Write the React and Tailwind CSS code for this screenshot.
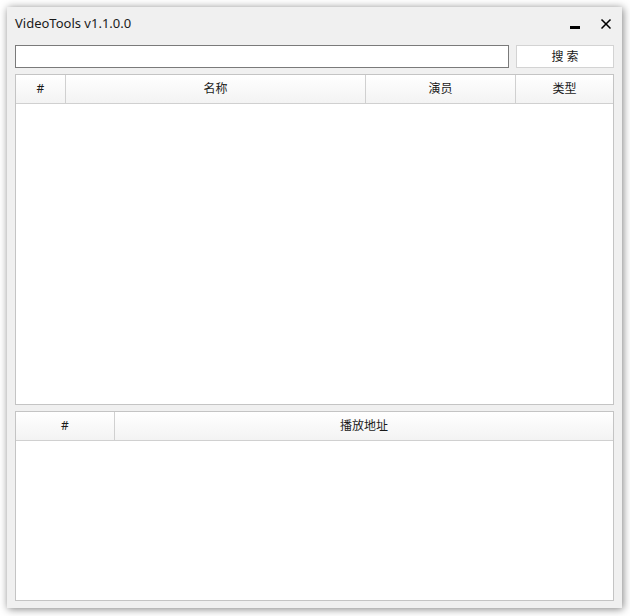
import { X } from 'lucide-react';

const mainCols = [
  { label: '#', width: 'w-[50px]' },
  { label: '名称', width: 'w-[300px]' },
  { label: '演员', width: 'w-[150px]' },
  { label: '类型', width: 'flex-1' },
];

const urlCols = [
  { label: '#', width: 'w-[99px]' },
  { label: '播放地址', width: 'flex-1' },
];

const Table = ({ cols, height }) => (
  <div className={`flex flex-col border border-[#c4c4c4] bg-white ${height}`}>
    <div className="flex h-[29px] shrink-0 border-b border-[#d0d0d0] bg-gradient-to-b from-white to-[#f3f3f3]">
      {cols.map((col, i) => (
        <div
          key={col.label + i}
          className={`${col.width} flex items-center justify-center text-[12px] text-[#1a1a1a] ${
            i < cols.length - 1 ? 'border-r border-[#d0d0d0]' : ''
          }`}
        >
          {col.label}
        </div>
      ))}
    </div>
    <div className="flex-1 bg-white" />
  </div>
);

const App = () => {
  return (
    <div
      className="h-[616px] w-[630px] bg-white pl-[7px] pt-[7px]"
      style={{ fontFamily: '"Noto Sans", "Noto Sans CJK SC", sans-serif' }}
    >
      <div className="flex h-[601px] w-[615px] flex-col bg-[#f0f0f0] px-[8px] pb-[6px] shadow-[1px_1px_8px_rgba(0,0,0,0.5)]">
        {/* title bar */}
        <div className="flex h-[33px] shrink-0 items-center justify-between">
          <span className="text-[13px] text-[#1a1a1a]">VideoTools v1.1.0.0</span>
          <div className="flex items-center gap-[18px]">
            <div className="mt-[7px] h-[3px] w-[10px] bg-black" />
            <X className="h-[16px] w-[16px] text-black" strokeWidth={2.5} />
          </div>
        </div>

        {/* search row */}
        <div className="mt-[5px] flex h-[23px] shrink-0 gap-[7px]">
          <input
            className="h-full w-[494px] border border-[#7a7a7a] bg-white px-1 text-[12px] outline-none"
            type="text"
          />
          <button className="flex-1 border border-[#d3d3d3] bg-white text-[12px] text-[#1a1a1a]">
            搜 索
          </button>
        </div>

        <div className="mt-[6px]">
          <Table cols={mainCols} height="h-[331px]" />
        </div>
        <div className="mt-[6px]">
          <Table cols={urlCols} height="h-[190px]" />
        </div>
      </div>
    </div>
  );
};

export default App;
